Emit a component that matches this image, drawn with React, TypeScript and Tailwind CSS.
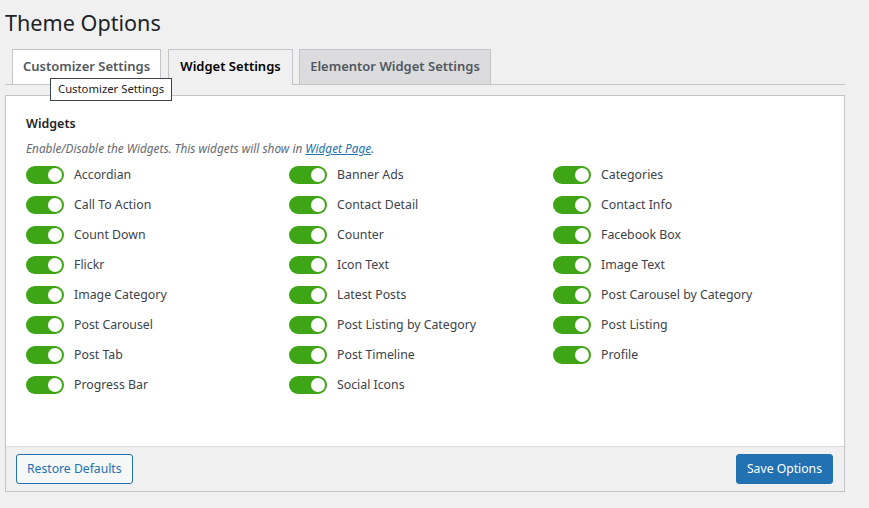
import React from "react";

const WIDGETS: string[][] = [
  ["Accordian", "Banner Ads", "Categories"],
  ["Call To Action", "Contact Detail", "Contact Info"],
  ["Count Down", "Counter", "Facebook Box"],
  ["Flickr", "Icon Text", "Image Text"],
  ["Image Category", "Latest Posts", "Post Carousel by Category"],
  ["Post Carousel", "Post Listing by Category", "Post Listing"],
  ["Post Tab", "Post Timeline", "Profile"],
  ["Progress Bar", "Social Icons"],
];

function Toggle() {
  return (
    <span className="relative inline-block w-[38px] h-[18px] rounded-full bg-[#3ea516] shrink-0">
      <span className="absolute right-[2px] top-[2px] w-[14px] h-[14px] rounded-full bg-white" />
    </span>
  );
}

function WidgetRow({ label }: { label: string }) {
  return (
    <div className="flex items-center h-[30px] gap-[10px]">
      <Toggle />
      <span className="text-[12.3px] text-[#3c434a]">{label}</span>
    </div>
  );
}

export default function App() {
  const items = WIDGETS.flat();
  return (
    <div
      className="relative w-[869px] h-[508px] overflow-hidden bg-[#f0f0f1] text-[#3c434a]"
      style={{ fontFamily: '"Noto Sans", "Open Sans", sans-serif' }}
    >
      <h1 className="pl-[5px] pt-[8px] text-[21.6px] leading-[29px] font-normal text-[#1d2327]">
        Theme Options
      </h1>

      {/* tabs */}
      <div className="ml-[5px] mt-[13px] w-[840px] h-[35px] border-b border-[#c3c4c7] pl-[7px] flex items-end">
        <div className="w-[149px] h-[35px] border border-b-0 border-[#c3c4c7] bg-white flex items-center justify-center text-[13px] font-semibold text-[#50575e]">
          Customizer Settings
        </div>
        <div className="ml-[7px] w-[125px] h-[36px] -mb-px border border-b-0 border-[#c3c4c7] bg-[#f0f0f1] flex items-center justify-center pb-px text-[13px] font-semibold text-[#000]">
          Widget Settings
        </div>
        <div className="ml-[6px] w-[192px] h-[35px] border border-b-0 border-[#c3c4c7] bg-[#dcdcde] flex items-center justify-center text-[13px] font-semibold text-[#50575e]">
          Elementor Widget Settings
        </div>
      </div>

      {/* panel */}
      <div className="ml-[5px] mt-[10px] w-[840px] border border-[#c3c4c7] bg-white">
        <div className="h-[350px] pl-[20px] pt-[18px]">
          <div className="text-[12.5px] leading-[20px] font-semibold text-[#1d2327]">Widgets</div>
          <div className="mt-[5px] text-[11.8px] leading-[18px] italic text-[#646970]">
            Enable/Disable the Widgets. This widgets will show in{" "}
            <a className="text-[#2271b1] underline">Widget Page</a>.
          </div>
          <div className="mt-[3px] grid grid-cols-[263px_264px_263px]">
            {items.map((w) => (
              <WidgetRow key={w} label={w} />
            ))}
          </div>
        </div>
        <div className="h-[45px] border-t border-[#dcdcde] bg-[#f0f0f1] flex items-center justify-between pl-[10px] pr-[11px]">
          <button className="h-[30px] px-[10px] rounded-[3px] border border-[#2271b1] bg-[#f6f7f7] text-[12.2px] text-[#2271b1]">
            Restore Defaults
          </button>
          <button className="h-[30px] px-[10px] rounded-[3px] border border-[#2271b1] bg-[#2271b1] text-[12.2px] text-white">
            Save Options
          </button>
        </div>
      </div>

      {/* tooltip */}
      <div className="absolute left-[50px] top-[78px] h-[23px] px-[7px] border border-[#3c434a] bg-white flex items-center text-[11.3px] text-[#1d2327]">
        Customizer Settings
      </div>
    </div>
  );
}
